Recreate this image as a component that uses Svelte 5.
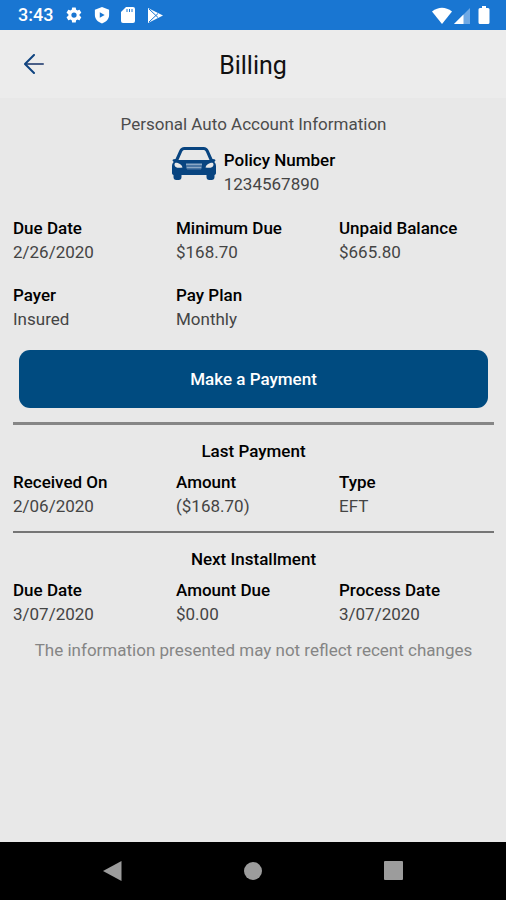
<script>
	const account = [
		{ label: 'Due Date', value: '2/26/2020' },
		{ label: 'Minimum Due', value: '$168.70' },
		{ label: 'Unpaid Balance', value: '$665.80' },
		{ label: 'Payer', value: 'Insured' },
		{ label: 'Pay Plan', value: 'Monthly' }
	];

	const sections = [
		{
			title: 'Last Payment',
			items: [
				{ label: 'Received On', value: '2/06/2020' },
				{ label: 'Amount', value: '($168.70)' },
				{ label: 'Type', value: 'EFT' }
			]
		},
		{
			title: 'Next Installment',
			items: [
				{ label: 'Due Date', value: '3/07/2020' },
				{ label: 'Amount Due', value: '$0.00' },
				{ label: 'Process Date', value: '3/07/2020' }
			]
		}
	];
</script>

{#snippet details(items)}
	<dl class="details">
		{#each items as item}
			<div>
				<dt>{item.label}</dt>
				<dd>{item.value}</dd>
			</div>
		{/each}
	</dl>
{/snippet}

<div class="screen">
	<div class="status">
		<span class="time">3:43</span>
		<div class="left-icons">
			<svg width="18" height="18" viewBox="0 0 24 24" fill="#fff">
				<path fill-rule="evenodd" d="M19.4 13a7.500 7.500 0 0 0 0-2l2.100-1.600a.5.5 0 0 0 .1-.6l-2-3.500a.5.5 0 0 0-.6-.2l-2.500 1a7 7 0 0 0-1.700-1l-.4-2.600a.5.5 0 0 0-.5-.5h-4a.5.5 0 0 0-.5.5L9 5.100a7 7 0 0 0-1.700 1l-2.500-1a.5.5 0 0 0-.6.2l-2 3.500a.5.5 0 0 0 .1.6L4.500 11a7.500 7.500 0 0 0 0 2l-2.200 1.600a.5.5 0 0 0-.1.6l2 3.500a.5.5 0 0 0 .6.200l2.500-1a7 7 0 0 0 1.700 1l.4 2.600a.5.5 0 0 0 .5.500h4a.5.5 0 0 0 .5-.5l.4-2.600a7 7 0 0 0 1.700-1l2.500 1a.5.5 0 0 0 .6-.2l2-3.500a.5.5 0 0 0-.1-.6zM12 15.500a3.500 3.500 0 1 1 0-7 3.500 3.500 0 0 1 0 7z" />
			</svg>
			<svg width="16" height="18" viewBox="0 0 18 20" fill="#fff">
				<path fill-rule="evenodd" d="M9 1 17 4v6c0 4.500-3.200 7.800-8 9.500C4.200 17.800 1 14.500 1 10V4zM6.500 7v6l5.500-3z" />
			</svg>
			<svg width="14" height="16" viewBox="0 0 14 16">
				<path fill="#fff" d="M5 0h7a2 2 0 0 1 2 2v12a2 2 0 0 1-2 2H2a2 2 0 0 1-2-2V5z" />
				<path stroke="#1976d2" stroke-width="1" d="M6 2v3M8.500 2v3M11 2v3" />
			</svg>
			<svg width="18" height="18" viewBox="0 0 18 18">
				<path fill="#fff" d="M2 2 17 9.500 2 17z" />
				<path fill="none" stroke="#1976d2" stroke-width="1" d="m3 3 9 8.500M3 16l9-8.500" />
			</svg>
		</div>
		<div class="right-icons">
			<svg width="20" height="17" viewBox="0 0 20 17">
				<path fill="#fff" d="M0 4.500Q10-3 20 4.500L10 17z" />
			</svg>
			<svg width="16" height="16" viewBox="0 0 16 16">
				<path fill="#6fa9e5" d="M16 0v16H0z" />
				<path fill="#fff" d="M9.500 6.500V16H0z" />
			</svg>
			<svg width="12" height="18" viewBox="0 0 12 18">
				<path fill="#fff" d="M4 0h4v2h2a1.500 1.500 0 0 1 1.500 1.500v13A1.500 1.500 0 0 1 10 18H2a1.500 1.500 0 0 1-1.500-1.500v-13A1.500 1.500 0 0 1 2 2h2z" />
			</svg>
		</div>
	</div>

	<header>
		<button class="back" aria-label="Back">
			<svg width="20" height="20" viewBox="0 0 20 20" fill="none" stroke-width="2" stroke-linecap="round" stroke-linejoin="round">
				<path stroke="#4a5f88" d="M2 10h17" />
				<path stroke="#0f4480" d="m10 1-9 9 9 9" />
			</svg>
		</button>
		<h1>Billing</h1>
	</header>

	<main>
		<p class="intro">Personal Auto Account Information</p>

		<div class="policy">
			<svg width="44" height="33" viewBox="0 0 44 33">
				<path fill="#084480" fill-rule="evenodd" d="M12.500 0h19c2.600 0 4.200 1.200 5.200 3.500L40.500 12l1.700.3c1.300.3 1.500 1.200.8 2l-.8.700c1.200 1 1.800 2.300 1.800 4.200V26c0 1-.6 1.800-1.500 2v2c0 1.800-1 3-2.800 3h-2.400c-1.800 0-2.800-1.200-2.800-3v-2h-25v2c0 1.800-1 3-2.800 3H4.300c-1.800 0-2.800-1.200-2.800-3v-2C.6 27.800 0 27 0 26v-6.800c0-1.900.6-3.200 1.800-4.200l-.8-.7c-.7-.8-.5-1.700.8-2l1.700-.3 3.800-8.500C8.300 1.200 9.900 0 12.500 0zm.3 3c-1.400 0-2.200.6-2.700 1.800L6.500 13h31l-3.600-8.200C33.400 3.600 32.600 3 31.200 3z" />
				<path fill="#e8e8e8" d="M2.500 17.500c0-1.600 1-2 2.500-1.700 2.800.6 5 2.200 5.500 4.700-3.500.8-8 .5-8-3zM41.500 17.500c0-1.600-1-2-2.500-1.700-2.800.6-5 2.200-5.500 4.700 3.500.8 8 .5 8-3z" />
				<path stroke="#8aa7c5" stroke-width="2" d="M14 17.500h16M14.500 20.500h15" />
				<path stroke="#4a75a3" d="M14 19h16M15 22h14" />
			</svg>
			<dl>
				<dt>Policy Number</dt>
				<dd>1234567890</dd>
			</dl>
		</div>

		{@render details(account)}

		<button class="pay">Make a Payment</button>

		{#each sections as section}
			<section>
				<h2>{section.title}</h2>
				{@render details(section.items)}
			</section>
		{/each}

		<p class="note">The information presented may not reflect recent changes</p>
	</main>

	<nav>
		<button aria-label="Back">
			<svg width="20" height="20" viewBox="0 0 20 20"><path fill="#9c9c9c" d="M18.500 0v20L0 10z" /></svg>
		</button>
		<button aria-label="Home">
			<svg width="20" height="20" viewBox="0 0 20 20"><circle cx="10" cy="10" r="9" fill="#9c9c9c" /></svg>
		</button>
		<button aria-label="Recent apps">
			<svg width="20" height="20" viewBox="0 0 20 20"><rect x="1" width="19" height="19" rx="1" fill="#9c9c9c" /></svg>
		</button>
	</nav>
</div>

<style>
	:global(body) {
		margin: 0;
		background: #e8e8e8;
	}

	.screen {
		display: flex;
		flex-direction: column;
		min-height: 100vh;
		background: #e8e8e8;
		color: #000;
		font-family: Roboto, sans-serif;
		font-size: 17px;
		line-height: 24px;
	}

	button {
		padding: 0;
		border: 0;
		background: none;
		font: inherit;
		cursor: pointer;
	}

	svg {
		display: block;
	}

	h1,
	h2,
	p,
	dl,
	dd {
		margin: 0;
	}

	.status {
		display: flex;
		align-items: center;
		height: 30px;
		padding: 0 16px 0 18px;
		background: #1976d2;
		color: #fff;
	}

	.time {
		font-size: 18px;
		font-weight: 500;
	}

	.left-icons {
		display: flex;
		align-items: center;
		gap: 11px;
		margin-left: 12px;
	}

	.right-icons {
		display: flex;
		align-items: flex-end;
		gap: 5px;
		margin-left: auto;
	}

	.right-icons svg:first-child {
		margin-right: -3px;
	}

	.right-icons svg:last-child {
		margin-left: 3px;
	}

	header {
		display: grid;
		grid-template-columns: 44px 1fr 44px;
		align-items: center;
		height: 68px;
		padding: 0 12px;
		background: #ececec;
	}

	.back {
		display: flex;
		align-items: center;
		justify-content: center;
		height: 44px;
	}

	h1 {
		padding-top: 3px;
		font-size: 25px;
		font-weight: 400;
		line-height: 32px;
		text-align: center;
		color: #111;
	}

	main {
		flex: 1;
		padding: 14px 12px 0 13px;
	}

	.intro {
		text-align: center;
		color: #4c4c4c;
	}

	.policy {
		display: flex;
		justify-content: center;
		gap: 8px;
		margin: 12px 0 20px;
	}

	.policy svg {
		margin-top: -1px;
	}

	dt {
		font-weight: 500;
	}

	dd {
		color: #444;
		font-weight: 400;
	}

	.details {
		display: grid;
		grid-template-columns: repeat(3, 1fr);
		gap: 19px 8px;
	}

	.pay {
		display: block;
		width: calc(100% - 12px);
		height: 58px;
		margin: 19px 6px 14px;
		border-radius: 11px;
		background: #004b80;
		color: #fff;
		font-weight: 500;
	}

	section {
		padding: 14px 0 13px;
		border-top: 3px solid #868686;
	}

	section + section {
		padding-bottom: 12px;
		border-top: 2px solid #757575;
	}

	h2 {
		margin-bottom: 7px;
		font-size: 17px;
		font-weight: 500;
		text-align: center;
	}

	.note {
		text-align: center;
		color: #858585;
	}

	nav {
		display: flex;
		justify-content: center;
		gap: 100px;
		height: 58px;
		background: #000;
	}

	nav button {
		display: flex;
		align-items: center;
		justify-content: center;
		width: 40px;
	}
</style>
